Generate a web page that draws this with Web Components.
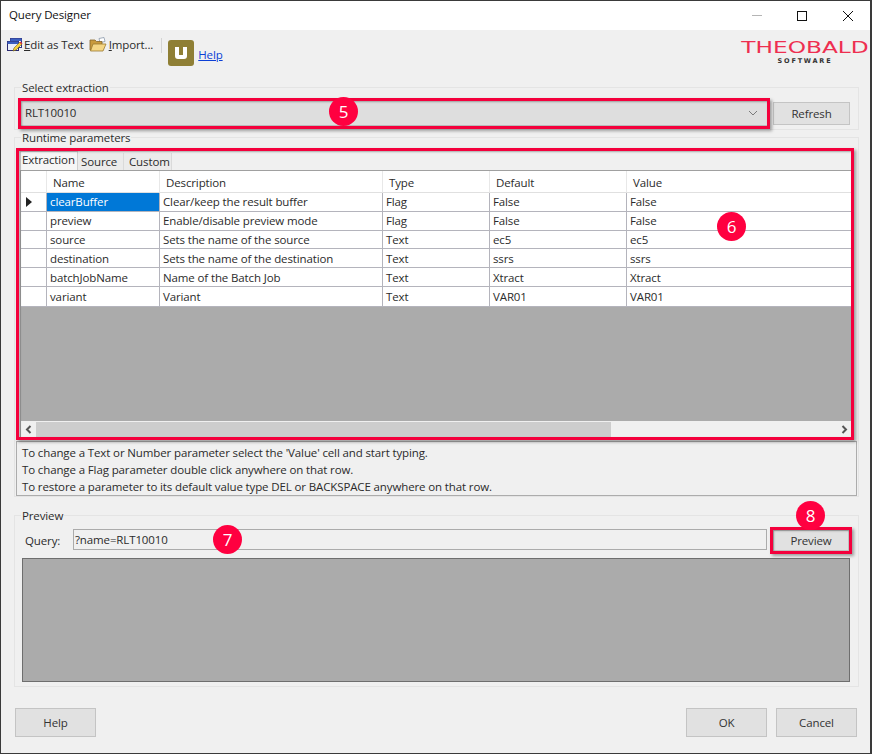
<!DOCTYPE html>
<html>
<head>
<meta charset="utf-8">
<title>Query Designer</title>
<style>
    html, body { margin: 0; padding: 0; background: #f0f0f0; }
    body { font: 11.5px/14px "Open Sans", "Liberation Sans", sans-serif; letter-spacing: -.125px; color: #2b2b2b; }
</style>
</head>
<body>

<q-window>
    <q-titlebar title-text="Query Designer"></q-titlebar>
    <q-toolbar></q-toolbar>

    <q-group label="Select extraction" style="height:43px">
        <div style="display:flex;gap:5px;margin:5px 0 0 5px;align-items:flex-start">
            <q-callout number="5" style="--top:-2px;--left:-2px;--right:-2px;--bottom:-3px;--bx:309px;--by:-3px">
                <q-combo value="RLT10010"></q-combo>
            </q-callout>
            <q-button style="width:77px;height:23px;margin-top:2px">Refresh</q-button>
        </div>
    </q-group>

    <q-group label="Runtime parameters" style="margin-top:7px;height:360px">
        <q-callout number="6" style="display:block;margin:6px 6px 0 5px;--top:-3px;--left:-4px;--right:-2px;--bottom:-2px;--bx:697px;--by:61px">
            <q-tabs></q-tabs>
            <q-grid></q-grid>
        </q-callout>
        <q-hint>
            <div>To change a Text or Number parameter select the 'Value' cell and start typing.</div>
            <div>To change a Flag parameter double click anywhere on that row.</div>
            <div>To restore a parameter to its default value type DEL or BACKSPACE anywhere on that row.</div>
        </q-hint>
    </q-group>

    <q-group label="Preview" style="margin-top:18px;height:172px">
        <div style="display:flex;align-items:flex-start;margin:5px 0 0 0">
            <span style="width:48px;margin:6px 0 0 10px">Query:</span>
            <q-field value="?name=RLT10010" style="margin-top:1px"></q-field>
            <q-callout number="8" style="margin:2px 0 0 6px;--top:-3px;--left:-3px;--right:-3px;--bottom:-3px;--bx:23px;--by:-29px">
                <q-button style="width:76px;height:21px">Preview</q-button>
            </q-callout>
        </div>
        <div style="margin:7px 8px 0 7px;height:122px;background:#ababab;border:1px solid #6e6e6e"></div>
    </q-group>

    <div style="display:flex;margin:21px 0 0 14px;width:842px">
        <q-button style="width:81px;height:29px;padding-top:1px">Help</q-button>
        <span style="flex:1"></span>
        <q-button style="width:81px;height:29px;padding-top:1px">OK</q-button>
        <q-button style="width:81px;height:29px;padding-top:1px;margin-left:9px">Cancel</q-button>
    </div>
</q-window>

<script>
class QWindow extends HTMLElement {
    constructor() {
        super();
        this.attachShadow({ mode: 'open' });
        this.shadowRoot.innerHTML = `
        <style>
            :host {
                display: block;
                box-sizing: border-box;
                width: 872px;
                height: 754px;
                background: #f0f0f0;
                border: solid #3a3a3a;
                border-width: 1px 2px 1px 1px;
                overflow: hidden;
            }
        </style>
        <slot></slot>`;
    }
}

class QTitlebar extends HTMLElement {
    constructor() {
        super();
        this.attachShadow({ mode: 'open' });
        const title = this.getAttribute('title-text') || '';
        this.shadowRoot.innerHTML = `
        <style>
            :host { display: flex; align-items: center; height: 29px; background: #fff; color: #111; }
            .name { padding-left: 8px; flex: 1; margin-top: -1px; }
            svg { display: block; margin-right: 16px; }
        </style>
        <span class="name">${title}</span>
        <svg width="102" height="12" viewBox="0 0 102 12" fill="none" stroke-width="1">
            <path d="M0 5.500H10" stroke="#b5b5b5"/>
            <rect x="45.500" y="1.500" width="9" height="9" stroke="#111"/>
            <path d="M91 1l10 10M101 1L91 11" stroke="#111"/>
        </svg>`;
    }
}

class QToolbar extends HTMLElement {
    constructor() {
        super();
        this.attachShadow({ mode: 'open' });
        this.shadowRoot.innerHTML = `
        <style>
            :host { display: flex; height: 57px; padding: 6px 0 0 5px; box-sizing: border-box; align-items: flex-start; }
            .tool { display: flex; align-items: center; gap: 1px; height: 18px; }
            .tool u { text-decoration-thickness: 1px; }
            .sep { width: 1px; height: 15px; background: #d4d4d4; margin: 2px 6px 0 8px; }
            .u {
                width: 26px; height: 26px; border-radius: 3px; background: #8f7f35;
                margin-top: 4px; display: flex; align-items: center; justify-content: center;
            }
            a { color: #0b3fd6; text-decoration: underline; margin: 12px 0 0 4px; }
            .spacer { flex: 1; }
        </style>
        <span class="tool" style="margin-right:5px">
            <svg width="17" height="17" viewBox="0 0 17 17">
                <rect x="4.500" y="1.500" width="11" height="9" fill="#fff" stroke="#33337f"/>
                <rect x="4.500" y="1.500" width="11" height="2.500" fill="#3a5fc0"/>
                <rect x="1.500" y="4.500" width="11" height="9" fill="#e9eefa" stroke="#2a2a70"/>
                <rect x="1.500" y="4.500" width="11" height="2.500" fill="#3a5fc0"/>
                <path d="M7 14l1-3 6-6 2 2-6 6z" fill="#f6d33c" stroke="#6a5a10" stroke-width=".6"/>
                <path d="M13.500 5.500l1-1 2 2-1 1z" fill="#d8323a"/>
            </svg>
            <span><u>E</u>dit as Text</span>
        </span>
        <span class="tool" style="gap:2px">
            <svg width="18" height="16" viewBox="0 0 18 16">
                <path d="M10 1.500l5-1 1 4-5 1z" fill="#fff" stroke="#7d8ca0" stroke-width=".7"/>
                <path d="M1 3h5l1.500 1.500H13V13H1z" fill="#c99a3c" stroke="#85652a" stroke-width=".8"/>
                <path d="M1.500 14L4 7h13l-3 7z" fill="#f5d684" stroke="#9a7a30" stroke-width=".8"/>
            </svg>
            <span><u>I</u>mport...</span>
        </span>
        <span class="sep"></span>
        <span class="u">
            <svg width="14" height="14" viewBox="0 0 14 14"><path d="M1 1h4v8h4V1h4v9a3 3 0 0 1-3 3H4a3 3 0 0 1-3-3z" fill="#fff"/></svg>
        </span>
        <a href="#help">Help</a>
        <span class="spacer"></span>
        <q-logo></q-logo>`;
    }
}

class QLogo extends HTMLElement {
    constructor() {
        super();
        this.attachShadow({ mode: 'open' });
        this.shadowRoot.innerHTML = `
        <style>
            :host { display: block; width: 126px; margin: 3px 2px 0 0; text-align: center; font-family: "DejaVu Sans", sans-serif; letter-spacing: 0; }
            .big { display: block; color: #ee2f50; font-size: 15px; line-height: 18px; transform: scaleX(1.55); white-space: nowrap; }
            .small { display: block; color: #333; font-size: 6.500px; line-height: 8px; font-weight: 700; letter-spacing: 1.800px; }
        </style>
        <span class="big">THEOBALD</span>
        <span class="small">SOFTWARE</span>`;
    }
}

class QGroup extends HTMLElement {
    constructor() {
        super();
        this.attachShadow({ mode: 'open' });
        const label = this.getAttribute('label') || '';
        this.shadowRoot.innerHTML = `
        <style>
            :host { display: block; box-sizing: border-box; width: 845px; margin-left: 13px; border: 1px solid #e4e4e4; }
            .legend { width: fit-content; height: 14px; margin: -7px 0 0 6px; padding: 0 1px; background: #f0f0f0; }
        </style>
        <div class="legend">${label}</div>
        <slot></slot>`;
    }
}

// red frame round its content, with the numbered badge that goes with it
class QCallout extends HTMLElement {
    constructor() {
        super();
        this.attachShadow({ mode: 'open' });
        const number = this.getAttribute('number') || '';
        this.shadowRoot.innerHTML = `
        <style>
            :host { display: block; position: relative; }
            .frame {
                position: absolute;
                top: var(--top); left: var(--left); right: var(--right); bottom: var(--bottom);
                border: 3px solid #f4003c;
                box-shadow: 2px 2px 3px rgba(0,0,0,.35), inset 1px 1px 2px rgba(0,0,0,.3);
                pointer-events: none;
            }
            .badge {
                position: absolute; left: var(--bx); top: var(--by);
                width: 29px; height: 29px; border-radius: 50%;
                background: #ff0040; color: #fff;
                font-size: 17px; line-height: 29px; text-align: center; letter-spacing: 0;
            }
        </style>
        <slot></slot>
        <div class="frame"></div>
        <div class="badge">${number}</div>`;
    }
}

class QCombo extends HTMLElement {
    constructor() {
        super();
        this.attachShadow({ mode: 'open' });
        const value = this.getAttribute('value') || '';
        this.shadowRoot.innerHTML = `
        <style>
            :host {
                display: flex; align-items: center; box-sizing: border-box;
                width: 748px; height: 26px; padding: 0 9px 0 4px;
                background: #dedede; border: 1px solid #bcbcbc;
            }
            span { flex: 1; }
        </style>
        <span>${value}</span>
        <svg width="10" height="6" viewBox="0 0 10 6" fill="none"><path d="M1 1l4 4 4-4" stroke="#7a7a7a"/></svg>`;
    }
}

class QButton extends HTMLElement {
    constructor() {
        super();
        this.attachShadow({ mode: 'open' });
        this.shadowRoot.innerHTML = `
        <style>
            :host {
                display: flex; align-items: center; justify-content: center; box-sizing: border-box;
                background: #e1e1e1; border: 1px solid #c4c4c4; color: #333;
            }
        </style>
        <slot></slot>`;
    }
}

class QField extends HTMLElement {
    constructor() {
        super();
        this.attachShadow({ mode: 'open' });
        const value = this.getAttribute('value') || '';
        this.shadowRoot.innerHTML = `
        <style>
            :host {
                display: flex; align-items: center; box-sizing: border-box; position: relative;
                width: 694px; height: 21px; padding-left: 1px;
                border: 1px solid #ababab; background: #f0f0f0;
            }
            .badge {
                position: absolute; left: 139px; top: -5px;
                width: 29px; height: 29px; border-radius: 50%;
                background: #ff0040; color: #fff;
                font-size: 17px; line-height: 29px; text-align: center; letter-spacing: 0;
            }
        </style>
        <span>${value}</span>
        <span class="badge">7</span>`;
    }
}

class QTabs extends HTMLElement {
    constructor() {
        super();
        this.attachShadow({ mode: 'open' });
        this.shadowRoot.innerHTML = `
        <style>
            :host { display: flex; height: 20px; box-sizing: border-box; border-bottom: 1px solid #a0a0a0; }
            span { display: flex; align-items: center; box-sizing: border-box; padding: 0 0 0 3px; background: #ebebeb; border-right: 1px solid #dadada; margin-top: 2px; }
            span.on { background: #f6f6f6; margin-top: 0; padding: 0 0 3px 1px; border: solid #cfcfcf; border-width: 1px 1px 0 1px; }
        </style>
        <span class="on" style="width:58px">Extraction</span>
        <span style="width:46px">Source</span>
        <span style="width:48px;padding-left:5px">Custom</span>`;
    }
}

class QHint extends HTMLElement {
    constructor() {
        super();
        this.attachShadow({ mode: 'open' });
        this.shadowRoot.innerHTML = `
        <style>
            :host { display: block; box-sizing: border-box; width: 841px; height: 55px; margin: 3px 0 0 1px; padding: 2px 0 0 5px; border: 1px solid #acacac; line-height: 17px; }
        </style>
        <slot></slot>`;
    }
}

const PARAMS = [
    ['clearBuffer', 'Clear/keep the result buffer', 'Flag', 'False', 'False'],
    ['preview', 'Enable/disable preview mode', 'Flag', 'False', 'False'],
    ['source', 'Sets the name of the source', 'Text', 'ec5', 'ec5'],
    ['destination', 'Sets the name of the destination', 'Text', 'ssrs', 'ssrs'],
    ['batchJobName', 'Name of the Batch Job', 'Text', 'Xtract', 'Xtract'],
    ['variant', 'Variant', 'Text', 'VAR01', 'VAR01']
];

class QGrid extends HTMLElement {
    constructor() {
        super();
        this.attachShadow({ mode: 'open' });
        const heads = ['Name', 'Description', 'Type', 'Default', 'Value'];
        let cells = '<div class="head"></div>' + heads.map(h => `<div class="head">${h}</div>`).join('');
        PARAMS.forEach((row, r) => {
            cells += `<div class="lead">${r === 0 ? '<svg width="6" height="10" viewBox="0 0 6 10"><path d="M0 0l6 5-6 5z" fill="#222"/></svg>' : ''}</div>`;
            row.forEach((text, c) => {
                cells += `<div class="cell${r === 0 && c === 0 ? ' sel' : ''}">${text}</div>`;
            });
        });
        this.shadowRoot.innerHTML = `
        <style>
            :host { display: flex; flex-direction: column; box-sizing: border-box; height: 267px; background: #ababab; border-left: 1px solid #9a9a9a; }
            .table {
                display: grid;
                grid-template-columns: 26px 113px 223px 107px 137px 1fr;
                grid-template-rows: 22px repeat(5, 18.8px) 20px;
            }
            .table > div { display: flex; align-items: center; box-sizing: border-box; padding-top: 1px; background: #fff; white-space: nowrap; overflow: hidden; }
            .table > .head { padding: 2px 0 0 6px; border-right: 1px solid #e8e8e8; border-bottom: 1px solid #e0e0e0; }
            .lead { justify-content: flex-start; padding-left: 5px; border-right: 1px solid #b4b4bc; border-bottom: 1px solid #b4b4bc; }
            .cell { padding-left: 3px; border-right: 1px solid #b4b4bc; border-bottom: 1px solid #b4b4bc; }
            .table > .sel { background: #0078d7; color: #fff; }
            .fill { flex: 1; }
            .bar { display: flex; align-items: center; height: 17px; background: #f0f0f0; }
            .arrow { width: 15px; display: flex; justify-content: center; }
            .thumb { width: 575px; height: 16px; background: #cdcdcd; }
            .track { flex: 1; }
        </style>
        <div class="table">${cells}</div>
        <div class="fill"></div>
        <div class="bar">
            <span class="arrow"><svg width="7" height="9" viewBox="0 0 7 9" fill="none"><path d="M5.500 1L2 4.500 5.500 8" stroke="#555" stroke-width="2"/></svg></span>
            <span class="thumb"></span>
            <span class="track"></span>
            <span class="arrow"><svg width="7" height="9" viewBox="0 0 7 9" fill="none"><path d="M1.500 1L5 4.500 1.500 8" stroke="#555" stroke-width="2"/></svg></span>
        </div>`;
    }
}

customElements.define('q-window', QWindow);
customElements.define('q-titlebar', QTitlebar);
customElements.define('q-toolbar', QToolbar);
customElements.define('q-logo', QLogo);
customElements.define('q-group', QGroup);
customElements.define('q-callout', QCallout);
customElements.define('q-combo', QCombo);
customElements.define('q-button', QButton);
customElements.define('q-field', QField);
customElements.define('q-tabs', QTabs);
customElements.define('q-hint', QHint);
customElements.define('q-grid', QGrid);
</script>
</body>
</html>
